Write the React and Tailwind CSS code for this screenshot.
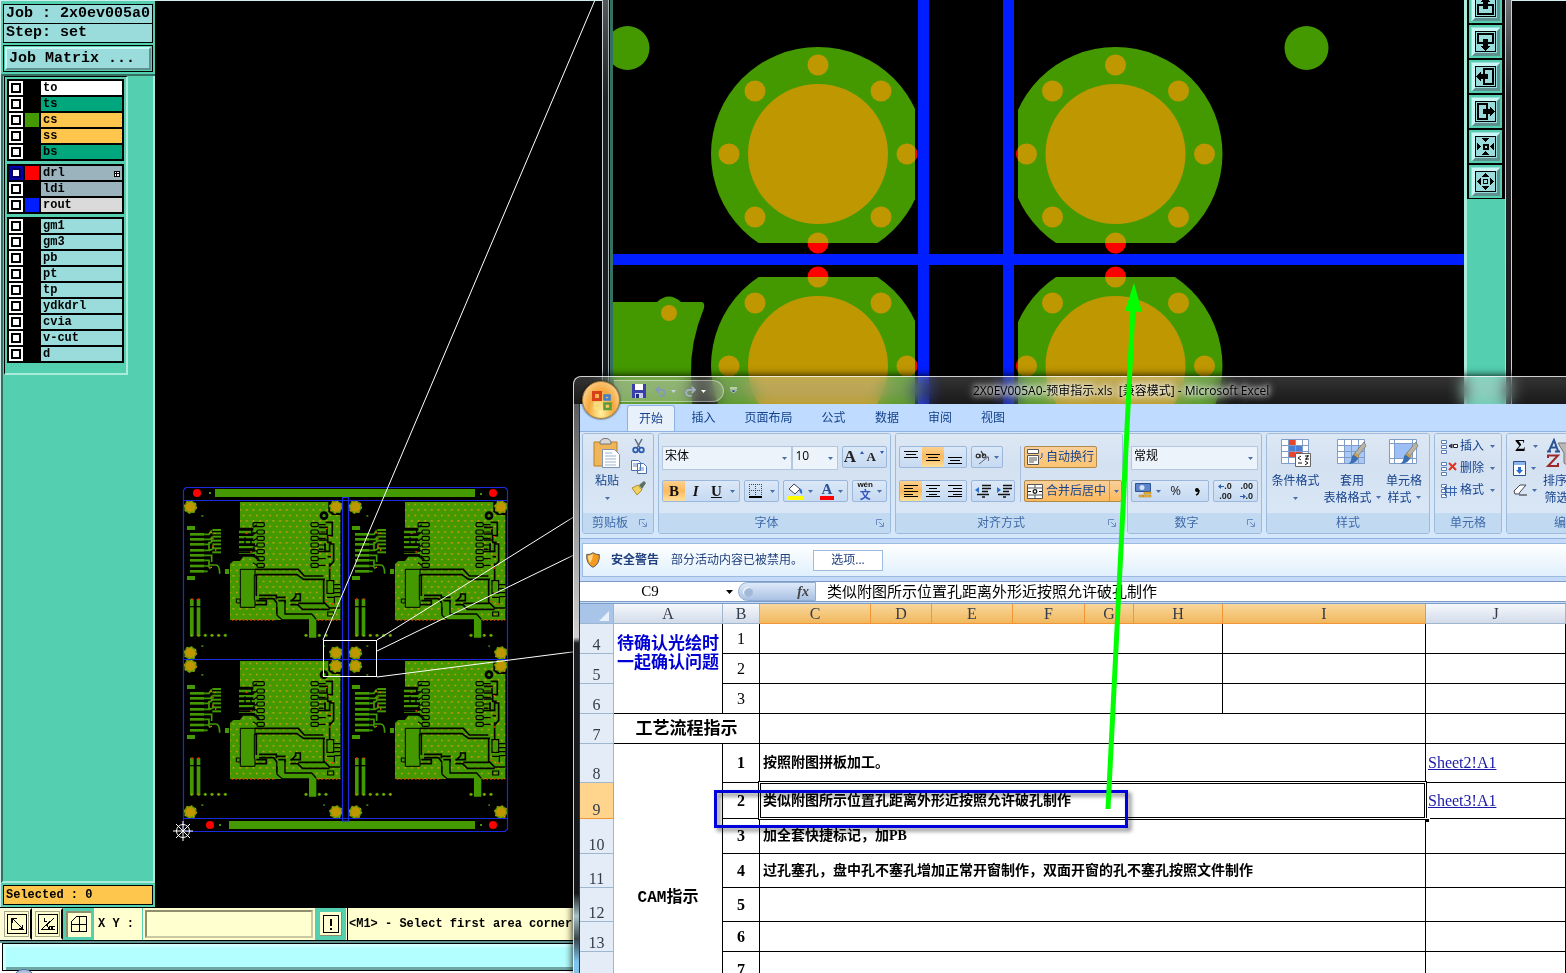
import React, { useState } from "react";
import { Undo2, Redo2 } from "lucide-react";

const LAYER_GROUPS = [
  [
    { name: "to", bg: "bg-white" },
    { name: "ts", bg: "bg-[#00a67c]" },
    { name: "cs", bg: "bg-[#ffc64e]", swatch: "bg-[#449900]" },
    { name: "ss", bg: "bg-[#ffc64e]" },
    { name: "bs", bg: "bg-[#00a67c]" },
  ],
  [
    { name: "drl", bg: "bg-[#9ab3bd]", swatch: "bg-[#ff0000]", active: true },
    { name: "ldi", bg: "bg-[#9ab3bd]" },
    { name: "rout", bg: "bg-[#dadada]", swatch: "bg-[#001eff]" },
  ],
  ["gm1", "gm3", "pb", "pt", "tp", "ydkdrl", "cvia", "v-cut", "d"].map((name) => ({ name, bg: "bg-[#9adcdb]" })),
];

const HOLES = [[0, -89], [63, -63], [89, 0], [63, 63], [0, 89], [-63, 63], [-89, 0], [-63, -63]];

/* ---------- job sidebar ---------- */

function LayerRow({ layer }) {
  const [on, setOn] = useState(!!layer.active);
  return (
    <label className="flex h-3.5 items-stretch gap-0.5">
      <input type="checkbox" checked={on} onChange={() => setOn(!on)}
        className="size-3.5 appearance-none bg-white shadow-[inset_0_0_0_2px_#fff,inset_0_0_0_4px_#000] checked:shadow-[inset_0_0_0_2px_#0000a8,inset_0_0_0_4px_#00006a]" />
      <span className={`w-3.5 ${layer.swatch || "bg-black"}`} />
      <span className={`flex flex-1 items-center justify-between pl-0.5 text-[12px] leading-[14px] ${layer.bg}`}>
        {layer.name}
        {layer.active && (
          <svg width="7" height="7" className="mr-0.5" shapeRendering="crispEdges"><path d="M1 1h5v5h-5zM3.500 1v5M1 3.500h5" fill="#fff" stroke="#000" /></svg>
        )}
      </span>
    </label>
  );
}

function Sidebar() {
  return (
    <aside className="flex w-[155px] shrink-0 flex-col border-l border-l-[#cfeeee] bg-[#54cfb0] font-bold">
      <div className="border-b-2 border-b-[#33705f] px-0.5 pt-[3px] pb-0.5 text-[15px]">
        <div className="border border-black bg-[#9adcdb] px-0.5 leading-[18px] whitespace-pre">Job : 2x0ev005a0</div>
        <div className="mb-0.5 border border-t-0 border-black bg-[#9adcdb] px-0.5 leading-[18px]">Step: set</div>
        <div className="border border-black p-px">
          <button className="block w-full border-2 border-t-[#c9f7f5] border-r-[#5f9090] border-b-[#5f9090] border-l-[#c9f7f5] bg-[#9adcdb] px-0.5 text-left leading-[19px] font-bold">Job Matrix ...</button>
        </div>
      </div>
      <div className="flex flex-1 flex-col border-r-2 border-b-2 border-l-2 border-r-[#a9ecdc] border-b-[#a9ecdc] border-l-[#33705f]">
        <div className="ml-px flex w-[124px] flex-col gap-[3px] border-t border-r-2 border-b-2 border-l border-t-black border-r-[#a9ecdc] border-b-[#a9ecdc] border-l-black px-0.5 pt-0.5 pb-2.5">
          {LAYER_GROUPS.map((group, i) => (
            <div key={i} className="flex flex-col gap-0.5 bg-black p-0.5">
              {group.map((layer) => <LayerRow key={layer.name} layer={layer} />)}
            </div>
          ))}
        </div>
      </div>
      <div className="px-0.5 pt-0.5 pb-0.5">
        <div className="border border-black bg-[#ffc64e] px-0.5 text-[12px] leading-[18px]">Selected : 0</div>
      </div>
    </aside>
  );
}

/* ---------- board overview ---------- */

function Pad({ x, y }) {
  return (
    <g>
      <circle cx={x} cy={y} r="19" fill="#449900" />
      <circle cx={x} cy={y} r="15" fill="#bf9700" />
      <circle cx={x} cy={y} r="18" fill="none" stroke="#bf9700" strokeWidth="5" strokeDasharray="5 9" />
    </g>
  );
}

// one circuit, drawn at three units per pixel
function Circuit() {
  const rows = [134, 156, 175, 195, 215, 236, 256];
  return (
    <g>
      <path d="M195 66H460V95L472 105H496V420H165V252L175 243H195L206 228H240V222H192V215H240V205H192V198H240V190H192V183H235V175H192V168H235V160H192V152H235V143H195Z" fill="#449900" />
      <path d="M195 66H460V95L472 105H496V420H165V252L175 243H195L206 228H240V143H195Z" fill="url(#vias)" />
      {[159, 174, 189, 207, 222, 237, 254, 270].map((y) => (
        <path key={y} d={`M45 ${y}h43v8h-43z`} fill="#449900" />
      ))}
      <path d="M36 138h24v12h-24zM36 288h24v12h-24zM150 267h12v15h-12z" fill="#449900" />
      {[147, 157, 167, 179, 190, 202, 214].map((y) => (
        <path key={y} d={`M112 ${y}h26v6h-26z`} fill="#449900" />
      ))}
      <path d="M88 163h14l8-12M88 178h18l6-8M88 193h12l14-12M88 211h16l10-5M88 226h22v20M88 241h14v14h20q12 0 12 26M88 258h12l6 8M88 274h10M102 185v24M110 170v16" fill="none" stroke="#449900" strokeWidth="5" />
      <path d="M106 156h5v4h-5zM118 158h5v4h-5zM112 174h4v4h-4zM112 196h4v8h-4zM120 208h4v4h-4zM106 260h5v4h-5z" fill="#e07800" />
      <path d="M45 357h11v111h-11zM65 357h11v111h-11z" fill="#449900" />
      <path d="M40 380h40" stroke="#000" strokeWidth="4" />
      <path d="M48 357h6M68 357h6" stroke="#e02000" strokeWidth="5" />
      {[50, 71, 91, 111, 131, 151, 393, 413, 433, 453].map((x) => (
        <g key={x}>
          <circle cx={x} cy="466" r="5" fill="#449900" />
          <circle cx={x} cy="466" r="2.5" fill="#bf9700" />
        </g>
      ))}
      <path d="M170 420H303M428 420H496" stroke="#d04a00" strokeWidth="4" strokeDasharray="5 6" />

      <circle cx="447" cy="107" r="13" fill="#000" />
      <circle cx="447" cy="107" r="5" fill="#449900" />
      {rows.map((y, i) => (
        <g key={y} fill="#449900" stroke="#000" strokeWidth="3.5">
          <rect x={i === 0 ? 234 : 246} y={y - 6} width={i === 0 ? 34 : 22} height="12" rx="4" />
          <rect x="408" y={y - 6} width="22" height="12" rx="4" />
          <path d={`M246 ${y}l-12 ${i > 3 ? -8 : 8}M430 ${y}h22`} fill="none" />
        </g>
      ))}
      <path d="M210 147h20v12h10M210 172v20M228 180v14M210 208h30M192 218h40M205 228h38l10 12" fill="none" stroke="#000" strokeWidth="4" />
      <path d="M452 127h20v40h-14v20h12M432 142h24v20h-24M432 180h24M450 190v24h14v-22h12v52l-12 14v40M432 208h14M458 230h10M464 250v50" fill="none" stroke="#000" strokeWidth="5" />
      <path d="M196 268h44v17h-2v74h2v23h-44zM184 357h12v12h-12z" fill="#449900" stroke="#000" strokeWidth="3" />
      <path d="M240 268h130l18 20h57M240 286h4v62M242 284h124l20 14h64M446 298v68l18 18h32M244 362h30v12h-34M252 346h52v12M252 356h44l10 14v32M306 352h26M310 362h20v8M348 364l14-14v-8h14v20h-30M346 374h22l14 14h82M370 370h78" fill="none" stroke="#000" strokeWidth="5" />
      <path d="M308 366h20v36h90l6 20v51h-22v-54h-80l-16-16z" fill="#449900" />
      <path d="M330 362v40h80l14 16M306 382v24l16 14h80" fill="none" stroke="#000" strokeWidth="4" />
      <path d="M456 302h20v38h-20zM478 314h18M478 326h18M478 338h18M478 350h18M456 352h22v18M458 396h18v12h-18z" fill="none" stroke="#000" strokeWidth="3.5" />
      <path d="M452 144h5v4h-5zM460 168h5v4h-5zM464 223h5v5h-5zM462 262h5v4h-5zM452 362h6v4h-6zM470 370h6v5h-6zM212 158h5v4h-5zM226 214h5v4h-5z" fill="#f04000" />
      <path d="M79 105h6v5h-6zM79 496h6v5h-6zM445 496h5v5h-5z" fill="#3b7a10" />
      <Pad x={46} y={81} />
      <Pad x={483} y={81} />
      <Pad x={46} y={519} />
      <Pad x={483} y={519} />
    </g>
  );
}

function BoardOverview() {
  return (
    <svg className="h-full w-full" role="img" aria-label="Board set">
      <defs>
        <pattern id="vias" width="20" height="33" patternUnits="userSpaceOnUse">
          <path d="M3 5h5v5h-5zM13 21h5v5h-5z" fill="#c99a10" />
        </pattern>
      </defs>
      <g transform="translate(-155 -1)">
        {[[175, 480], [340, 480], [175, 639], [340, 639]].map(([x, y]) => (
          <g key={`${x}-${y}`} transform={`translate(${x} ${y}) scale(.3333)`}><Circuit /></g>
        ))}
        <path d="M215 489H475V497H215ZM229 821H475V829H229Z" fill="#449900" />
        <g fill="none" stroke="#1a2ae0" strokeWidth="1.2">
          <path d="M186 487.500H505L507.500 490V829L505 831.500H186L183.500 829V490Z" />
          <path d="M183 500.500H507M183 659.500H507M183 818.500H507M342.500 821V497.500H348.500V821Z" />
        </g>
        <g fill="#ff0000">
          <circle cx="197" cy="493" r="4" /><circle cx="493" cy="493" r="4" />
          <circle cx="210" cy="825" r="4" /><circle cx="493" cy="825" r="4" />
        </g>
        <path d="M209 492h2v2h-2zM480 493h2v2h-2zM219 824h2v2h-2zM480 824h2v2h-2z" fill="#449900" />
        <g fill="none" stroke="#fff">
          <path d="M323.500 640.500H376.500V676.500H323.500Z" shapeRendering="crispEdges" />
          <path d="M323 640L595 0M377 640L580 513M377 651L580 552M377 677L580 651" />
          <circle cx="183" cy="831" r="6.500" />
          <path d="M173 831H193M183 821V841M176 824L190 838M190 824L176 838" />
        </g>
      </g>
    </svg>
  );
}

/* ---------- command bars under the board ---------- */

function CommandBar() {
  const tool = "flex w-[31px] items-center justify-center border-2 border-[#fafae0] border-r-black bg-[#ffffcf] outline-1 -outline-offset-4 outline-[#a8a888]";
  return (
    <div className="flex h-[34px] shrink-0 items-stretch border-y border-black bg-[#ffffcf] pl-px text-[12px] font-bold">
      <button aria-label="Zoom area" className={tool}>
        <svg width="20" height="20" fill="none" stroke="#000" shapeRendering="crispEdges"><path d="M.5.5h19v19H.5zM4.500 3.500v12h12M5.500 4.500l10 10M5.500 8.500v-4h4M15.500 10.500v4h-4" /></svg>
      </button>
      <button aria-label="Angle" className={tool}>
        <svg width="20" height="20" fill="none" stroke="#000" shapeRendering="crispEdges"><path d="M.5.5h19v19H.5zM16.500 3.500l-13 12h7M6.500 3.500v4h2M8.500 10.500l3 5M13.500 12.500h-2v3h2zM16.500 12.500h-2v3h2" /></svg>
      </button>
      <button aria-label="Grid" className="flex w-[31px] items-center justify-center border-3 border-[#54cfb0] bg-[#ffffcf] shadow-[inset_2px_2px_0_#8f8f70]">
        <svg width="16" height="16" fill="none" stroke="#000" shapeRendering="crispEdges"><path d="M.5 5.500l5-5h10v15H.5zM8.500 0v16M0 8.500h16" /></svg>
      </button>
      <label htmlFor="xy" className="w-12 pl-1 leading-8 whitespace-pre">X Y :</label>
      <div className="border-x border-[#54cfb0] px-0.5 py-0.5">
        <input id="xy" className="block h-7 w-[168px] border-2 border-t-[#8f8f70] border-r-[#c9c9a4] border-b-[#c9c9a4] border-l-[#8f8f70] bg-[#ffffcf] px-1" />
      </div>
      <button aria-label="Message" className="flex w-[30px] items-center justify-center border-4 border-[#54cfb0] bg-[#ffffcf] shadow-[inset_-1px_-1px_0_#8f8f70]">
        <svg width="16" height="18" fill="none" stroke="#000" shapeRendering="crispEdges"><path d="M.5.5h15v17H.5z" /><path d="M8 4v7M8 13v2" strokeWidth="2" /></svg>
      </button>
      <p className="ml-px flex-1 border-l border-black pl-px leading-8 whitespace-nowrap">&lt;M1&gt; - Select first area corner</p>
    </div>
  );
}

/* ---------- zoomed board window ---------- */

function PadDetail({ x, y, clip }) {
  return (
    <g>
      {HOLES.map(([dx, dy]) => <circle key={`${dx}${dy}`} cx={x + dx} cy={y + dy} r="10.500" fill="#ff0000" />)}
      <g clipPath={`url(#${clip})`}>
        <circle cx={x} cy={y} r="107" fill="#449900" />
        <circle cx={x} cy={y} r="70" fill="#bf9700" />
        {HOLES.map(([dx, dy]) => <circle key={`${dx}${dy}`} cx={x + dx} cy={y + dy} r="10.500" fill="#bf9700" />)}
      </g>
    </g>
  );
}

// frame outline, then the solid arrow leaving it
const NAV = [
  ["Pan up", "M3 9h15v9h-15z", "M8 13V6H6l4.500-5L15 6h-2v7z"],
  ["Pan down", "M3 3h15v9h-15z", "M8 8v7H6l4.500 5L15 15h-2V8z"],
  ["Pan left", "M9 3h9v15h-9z", "M13 8H6V6l-5 4.500L6 15v-2h7z"],
  ["Pan right", "M3 3h9v15h-9z", "M8 8h7V6l5 4.500L15 15v-2H8z"],
];

function NavButton({ label, children }) {
  return (
    <button aria-label={label} className="flex h-[33px] w-[33px] shrink-0 items-center justify-center border-2 border-[#54cfb0] bg-[#9adcdb]">
      <span className="flex h-7 w-7 items-center justify-center border-3 border-t-[#c9f7f5] border-r-[#5f9090] border-b-[#5f9090] border-l-[#c9f7f5]">
        <svg width="21" height="21" shapeRendering="crispEdges"><path d="M.5.5h20v20H.5z" fill="none" stroke="#000" />{children}</svg>
      </span>
    </button>
  );
}

function DetailWindow() {
  return (
    <section className="absolute top-0 right-[54px] bottom-0 left-[602px] flex border-x border-[#c8d4d6] bg-black">
      <div className="w-1.5 border-r border-[#aab8ba] bg-linear-to-b from-[#55595c] via-[#202225] via-10% to-[#101214]" />
      <div className="ml-px w-[3px] bg-[#33705f]" />
      <svg className="h-full min-w-0 flex-1" role="img" aria-label="Board detail">
        <defs>
          <clipPath id="tl"><path d="M600 0H915V243H600Z" /></clipPath>
          <clipPath id="tr"><path d="M1018 0H1300V243H1018Z" /></clipPath>
          <clipPath id="bl"><path d="M600 277H915V500H600Z" /></clipPath>
          <clipPath id="br"><path d="M1018 277H1300V500H1018Z" /></clipPath>
        </defs>
        <g transform="translate(-613 0)">
          <circle cx="627.500" cy="48" r="22" fill="#449900" />
          <circle cx="1306.500" cy="48" r="22" fill="#449900" />
          <PadDetail x={818} y={154} clip="tl" />
          <PadDetail x={1115.5} y={154} clip="tr" />
          <PadDetail x={818} y={366} clip="bl" />
          <PadDetail x={1115.5} y={366} clip="br" />
          <path d="M613 302H657Q669 291 681 302H702Q705 303 704 308Q690 342 691 375L693 420H613Z" fill="#449900" />
          <circle cx="669" cy="313" r="8" fill="#bf9700" />
          <path d="M918 0h11v500h-11zM1003 0h11v500h-11zM613 254h851v11h-851z" fill="#001eff" />
        </g>
      </svg>
      <div className="flex w-[41px] flex-col border-l-3 border-[#a9ecdc] bg-[#54cfb0]">
        <div className="-mt-2.5 flex flex-col gap-0.5 bg-black px-0.5 pb-px">
          {NAV.map(([label, frame, arrow]) => (
            <NavButton key={label} label={label}>
              <path d={frame} fill="none" stroke="#000" strokeWidth="2" />
              <path d={arrow} />
            </NavButton>
          ))}
          <NavButton label="Zoom in">
            <path d="M8.500 8.500h4v4h-4z" fill="none" stroke="#000" strokeWidth="2" />
            <path d="M6 2h9l-4.500 4zM6 19h9l-4.500-4zM2 6v9l4-4.500zM19 6v9l-4-4.500z" />
          </NavButton>
          <NavButton label="Zoom out">
            <path d="M8.500 8.500h4v4h-4z" fill="none" stroke="#000" />
            <path d="M7 6h7l-3.500-4zM7 15h7l-3.500 4zM6 7v7l-4-3.500zM15 7v7l4-3.500z" />
          </NavButton>
        </div>
      </div>
      <div className="w-1.5 border-l border-[#c8d4d6] bg-linear-to-b from-[#6d7376] via-[#202225] via-10% to-[#101214]" />
    </section>
  );
}

/* ---------- spreadsheet window ---------- */

function Caret({ className = "" }) {
  return <svg width="5" height="3" className={`shrink-0 ${className}`}><path d="M0 0h5l-2.500 3z" fill="#4a6fa8" /></svg>;
}

function Lines({ rows }) {
  return (
    <svg width="14" height="14" shapeRendering="crispEdges">
      {rows.map(([x, y, w]) => <path key={y} d={`M${x} ${y + 0.5}h${w}`} stroke="#000" strokeWidth="1" />)}
    </svg>
  );
}

function Btn({ label, on, wide, children }) {
  return (
    <button aria-label={label}
      className={`flex h-full items-center justify-center gap-1 ${wide ? "flex-[3]" : "flex-[2]"} ${on ? "bg-linear-to-b from-[#fcd08c] via-[#fbb95c] to-[#fde09a]" : ""}`}>
      {children}
    </button>
  );
}

function Strip({ className, children }) {
  return (
    <div className={`flex h-[22px] overflow-hidden rounded-xs border border-[#9bb7dc] bg-linear-to-b from-[#dbe8f7] to-[#c6daf2] ${className}`}>{children}</div>
  );
}

function Combo({ label, value, className }) {
  return (
    <div className={`relative h-6 border border-[#b3c7e1] bg-[#ecf3fb] ${className}`}>
      <select aria-label={label} className="block h-full w-full appearance-none pb-1 pl-0.5 text-[12px] leading-4 text-black">
        <option>{value}</option>
      </select>
      <Caret className="pointer-events-none absolute top-2.5 right-1" />
    </div>
  );
}

function Group({ title, width, launcher, children }) {
  return (
    <section className={`flex shrink-0 flex-col overflow-hidden rounded-[3px] border border-[#9cbbdd] bg-[#d3e2f3] shadow-[inset_1px_1px_0_#eef5fc] ${width}`}>
      <div className="min-h-0 flex-1 bg-linear-to-b from-[#dde8f4] via-[#d4e1f1] via-40% to-[#d8e6f6]">{children}</div>
      <h2 className="relative h-5 bg-[#c1d9f1] text-center text-[12px] leading-5 text-[#3e6aaa]">
        <span className={launcher ? "pr-4" : ""}>{title}</span>
        {launcher && (
          <svg width="8" height="8" className="absolute top-1.5 right-1.5" fill="none" stroke="#6b8dbf"><path d="M.5 6V.5H6M3 3l4 4M7.500 3.500v4h-4" /></svg>
        )}
      </h2>
    </section>
  );
}

function Brush() {
  return (
    <g>
      <path d="M29 8L21 18l-4-2L27 4z" fill="#b9b4a6" stroke="#6b6557" strokeWidth=".6" />
      <path d="M18 15l4 3q-1 7-11 8q4-3 4-8z" fill="#3b6fb5" />
      <path d="M18 15l4 3-1 2-4-3z" fill="#e0a030" />
    </g>
  );
}

function Grid30({ children }) {
  return (
    <svg width="30" height="30">
      <path d="M.5 1.500h27v24H.5z" fill="#fff" />
      {children}
    </svg>
  );
}

const GRID_LINES = "M.5 1.500h27v24H.5zM7.500 1.500v24M14.500 1.500v24M21.500 1.500v24M.5 7.500h27M.5 13.500h27M.5 19.500h27";

function BigButton({ width, icon, lines, caret }) {
  return (
    <button className={`flex h-full shrink-0 flex-col items-center pt-1 text-[12px] leading-[17px] text-[#15428b] ${width}`}>
      {icon}
      <span className="mt-1 whitespace-nowrap">{lines[0]}</span>
      {lines[1] ? (
        <span className="flex items-center gap-1 whitespace-nowrap">{lines[1]}{caret && <Caret />}</span>
      ) : <Caret className="mt-2" />}
    </button>
  );
}

function ClipboardGroup() {
  return (
    <Group title="剪贴板" width="w-[72px]" launcher>
      <div className="flex h-full">
        <BigButton width="w-12" lines={["粘贴"]} icon={
          <svg width="28" height="30">
            <path d="M1 4h23v24H1z" fill="#efb558" stroke="#b9822a" />
            <path d="M7 4q1-3 4-3.500h3q3 .5 4 3.500v2H7z" fill="#d8d8d8" stroke="#777" />
            <path d="M9.500 11.500h12l5 5v13h-17z" fill="#fff" stroke="#7f93b2" />
            <path d="M12 15h7M12 18h11M12 21h11M12 24h11M12 27h11" stroke="#9db3d4" />
          </svg>
        } />
        <div className="flex flex-col gap-1.5 pt-1">
          <button aria-label="剪切"><svg width="16" height="16"><path d="M4 1l5 9M11 1L6 10" stroke="#5b6a80" strokeWidth="1.500" /><circle cx="4.500" cy="12" r="2.300" fill="none" stroke="#2a5db0" strokeWidth="1.800" /><circle cx="10.500" cy="12" r="2.300" fill="none" stroke="#2a5db0" strokeWidth="1.800" /></svg></button>
          <button aria-label="复制"><svg width="16" height="14"><path d="M.5.5h7l2 2v8h-9zM6.500 3.500h6l3 3v7h-9z" fill="#fff" stroke="#4a6fb0" /><path d="M2 4h4M2 6h4M8 8h5M8 10h5" stroke="#5f8ad0" /></svg></button>
          <button aria-label="格式刷"><svg width="16" height="16"><path d="M1 8l6-3 4 5-5 5z" fill="#f0d060" stroke="#b0902a" /><path d="M8 5l5-4 2 2-4 6z" fill="#5a7060" /></svg></button>
        </div>
      </div>
    </Group>
  );
}

function FontGroup() {
  return (
    <Group title="字体" width="w-[233px]" launcher>
      <div className="flex flex-col gap-2.5 px-[3px] pt-3">
        <div className="flex">
          <Combo label="字体" value="宋体" className="w-[131px]" />
          <Combo label="字号" value="10" className="w-[46px]" />
          <Strip className="ml-1 w-[45px]">
            <Btn label="增大字号"><span className="font-['Liberation_Serif',serif] text-[17px] font-bold text-[#222]">A</span><svg width="4" height="14"><path d="M0 4l2-3 2 3z" fill="#2a5db0" /></svg></Btn>
            <Btn label="减小字号"><span className="font-['Liberation_Serif',serif] text-[13px] font-bold text-[#222]">A</span><svg width="4" height="14"><path d="M0 1h4l-2 3z" fill="#2a5db0" /></svg></Btn>
          </Strip>
        </div>
        <div className="flex gap-1 font-['Liberation_Serif',serif] text-[15px] text-[#111]">
          <Strip className="w-[79px]">
            <Btn on label="加粗"><b>B</b></Btn>
            <Btn label="倾斜"><b className="italic">I</b></Btn>
            <Btn wide label="下划线"><b className="underline">U</b><Caret className="ml-1" /></Btn>
          </Strip>
          <Strip className="w-[35px]">
            <Btn label="边框"><svg width="13" height="14" fill="none" shapeRendering="crispEdges"><path d="M.5 0v12M6.500 0v12M12.500 0v12M0 .5h13M0 6.500h13" stroke="#444" strokeDasharray="1 1" /><path d="M0 13h13" stroke="#000" strokeWidth="2" /></svg><Caret className="ml-1" /></Btn>
          </Strip>
          <Strip className="w-[66px]">
            <Btn label="填充颜色"><svg width="17" height="18"><path d="M2 7l5-5 6 5-5 5z" fill="#fff" stroke="#445" /><path d="M12 6q4 1 3 6q-3-1-3-6z" fill="#2a6fd0" /><path d="M0 14h16v4H0z" fill="#ffff00" /></svg><Caret /></Btn>
            <Btn label="字体颜色"><span className="flex flex-col items-center border-b-4 border-[#ff0000] px-0.5 text-[15px] leading-[13px] font-bold text-[#2c5296]">A</span><Caret /></Btn>
          </Strip>
          <Strip className="w-[35px]">
            <Btn label="拼音"><span className="flex flex-col items-center font-['Liberation_Sans','Noto_Sans_CJK_SC',sans-serif] text-[8px] leading-[8px] font-bold">wén<span className="text-[11px] leading-[12px] text-[#3355c0]">文</span></span><Caret /></Btn>
          </Strip>
        </div>
      </div>
    </Group>
  );
}

const FULL = 14;

function AlignGroup() {
  return (
    <Group title="对齐方式" width="w-[228px]" launcher>
      <div className="flex pt-3 pl-[3px] text-[12px] text-[#15428b]">
        <div className="flex w-[122px] flex-col gap-3 border-r border-[#a8c0e0]">
          <div className="flex gap-1">
            <Strip className="w-[68px]">
              <Btn label="顶端对齐"><Lines rows={[[0, 1, FULL], [2, 4, 10], [0, 7, FULL]]} /></Btn>
              <Btn on label="垂直居中"><Lines rows={[[0, 4, FULL], [2, 7, 10], [0, 10, FULL]]} /></Btn>
              <Btn label="底端对齐"><Lines rows={[[0, 7, FULL], [2, 10, 10], [0, 13, FULL]]} /></Btn>
            </Strip>
            <Strip className="w-[32px]">
              <Btn label="方向"><svg width="15" height="15" fill="none" stroke="#333"><circle cx="3" cy="6" r="1.800" strokeWidth="1.300" /><path d="M5 4v4M6 1l3 5" strokeWidth="1.300" /><circle cx="9" cy="6" r="1.800" strokeWidth="1.300" /><path d="M4 14L13 7M9.500 7h4v4" stroke="#667" /></svg><Caret /></Btn>
            </Strip>
          </div>
          <div className="flex gap-1">
            <Strip className="w-[68px]">
              <Btn on label="左对齐"><Lines rows={[[0, 1, FULL], [0, 4, 9], [0, 7, FULL], [0, 10, 9], [0, 12, FULL]]} /></Btn>
              <Btn label="居中"><Lines rows={[[0, 1, FULL], [3, 4, 8], [0, 7, FULL], [3, 10, 8], [0, 12, FULL]]} /></Btn>
              <Btn label="右对齐"><Lines rows={[[0, 1, FULL], [5, 4, 9], [0, 7, FULL], [5, 10, 9], [0, 12, FULL]]} /></Btn>
            </Strip>
            <Strip className="w-[44px]">
              <Btn label="减少缩进量"><svg width="16" height="14"><path d="M7 1.500h9M7 4.500h9M7 7.500h6M2 10.500h12M7 13h3" stroke="#111" strokeWidth="1.500" /><path d="M0 6l4-3v6z" fill="#2a6fd0" /></svg></Btn>
              <Btn label="增加缩进量"><svg width="16" height="14"><path d="M7 1.500h9M7 4.500h9M7 7.500h6M2 10.500h12M7 13h3" stroke="#111" strokeWidth="1.500" /><path d="M5 6l-4-3v6z" fill="#2a6fd0" /></svg></Btn>
            </Strip>
          </div>
        </div>
        <div className="ml-[3px] flex flex-col items-start gap-3">
          <button className="flex h-[22px] items-center gap-0.5 rounded-xs border border-[#b08b4c] bg-linear-to-b from-[#f9cf98] to-[#fdc572] px-0.5 whitespace-nowrap">
            <svg width="17" height="16"><path d="M.5.5h11v4H.5zM.5 6.500h11v9H.5z" fill="#fff" stroke="#555" /><path d="M2 9h8M2 11h8M2 13h5" stroke="#555" /><path d="M15 4v4l-2 2" fill="none" stroke="#2a5db0" /></svg>自动换行
          </button>
          <button className="flex h-[22px] items-center gap-0.5 rounded-xs border border-[#b08b4c] bg-linear-to-b from-[#f9cf98] to-[#fdb95c] px-0.5 whitespace-nowrap">
            <svg width="17" height="15"><path d="M.5.5h15v14H.5zM.5 4h15M.5 11h15M8 .5V4M8 11v3.500" fill="#fff" stroke="#555" /><path d="M1 7.500h3M12 7.500h3" stroke="#111" /><circle cx="8" cy="7.500" r="1.800" fill="none" stroke="#111" strokeWidth="1.300" /></svg>合并后居中
            <span className="ml-px flex h-full items-center border-l border-[#c99a52] pl-1"><Caret /></span>
          </button>
        </div>
      </div>
    </Group>
  );
}

function NumberGroup() {
  return (
    <Group title="数字" width="w-[135px]" launcher>
      <div className="flex flex-col gap-2.5 px-[3px] pt-3">
        <Combo label="数字格式" value="常规" className="w-full" />
        <div className="flex gap-1 text-[13px] text-[#222]">
          <Strip className="w-[79px]">
            <Btn wide label="会计数字格式"><svg width="17" height="16"><path d="M.5.5h15v8h-15z" fill="#5c86c8" stroke="#2c5296" /><circle cx="7" cy="4.500" r="2.500" fill="#cfe0f8" /><path d="M9 9h7v2H9zM8 12h8v2H8zM4 12h4v2H4z" fill="#f0b93a" stroke="#a97a18" strokeWidth=".5" /></svg><Caret /></Btn>
            <Btn label="百分比">%</Btn>
            <Btn label="千位分隔"><svg width="6" height="9"><circle cx="3" cy="3" r="2" /><path d="M5 3q0 4-3 5" fill="none" stroke="#000" strokeWidth="1.500" /></svg></Btn>
          </Strip>
          <Strip className="w-[45px] font-['Liberation_Sans',sans-serif] text-[9px] leading-[10px] font-bold">
            <Btn label="增加小数位数">
              <span className="flex flex-col items-end">
                <span className="flex items-center"><svg width="6" height="5"><path d="M0 2.500l3-2.500v5zM3 2h3v1h-3z" fill="#2a5db0" /></svg>.0</span>
                <span>.00</span>
              </span>
            </Btn>
            <Btn label="减少小数位数">
              <span className="flex flex-col items-end">
                <span>.00</span>
                <span className="flex items-center"><svg width="6" height="5"><path d="M6 2.500l-3-2.500v5zM0 2h3v1h-3z" fill="#2a5db0" /></svg>.0</span>
              </span>
            </Btn>
          </Strip>
        </div>
      </div>
    </Group>
  );
}

function StyleGroup() {
  return (
    <Group title="样式" width="w-[164px]">
      <div className="flex h-full pl-px">
        <BigButton width="w-[55px]" lines={["条件格式"]} icon={
          <Grid30>
            <path d="M7 1h7v6H7zM7 13h14v6H7z" fill="#e8452c" /><path d="M7 7h14v6H7z" fill="#4a7fd8" />
            <path d={GRID_LINES} fill="none" stroke="#7f9dc8" />
            <path d="M14.500 15.500h15v13h-15z" fill="#fff" stroke="#666" />
            <path d="M20 18l-3 2 3 2M24 18h4M24 21h4M27 17l-2 5M17 25h4M24 23l3 2-3 2" fill="none" stroke="#111" />
          </Grid30>
        } />
        <BigButton width="w-[58px]" lines={["套用", "表格格式"]} caret icon={
          <Grid30><path d="M7 7h21v19H7z" fill="#a9c8f5" /><path d={GRID_LINES} fill="none" stroke="#7f9dc8" /><Brush /></Grid30>
        } />
        <BigButton width="w-[46px]" lines={["单元格", "样式"]} caret icon={
          <Grid30><path d="M.5 1.500h27v24H.5zM5.500 1.500v24M23.500 1.500v24M.5 5.500h27M.5 20.500h27" fill="none" stroke="#7f9dc8" /><path d="M6 6h17v14H6z" fill="#9cc0f5" /><Brush /></Grid30>
        } />
      </div>
    </Group>
  );
}

function CellsGroup() {
  const items = [
    ["插入", <path key="a" d="M8 7h3v-2l-3 2 3 2v-2zM12.500 5.500h4v3h-4z" fill="#fff" stroke="#223" />],
    ["删除", <path key="b" d="M8 2l7 7M15 2l-7 7" stroke="#e03020" strokeWidth="2" />],
    ["格式", <path key="c" d="M3 5.500h13M4.500 3v10M9.500 3v10M13.500 3v10M3 9.500h13" fill="none" stroke="#3a66b0" />],
  ];
  return (
    <Group title="单元格" width="w-[68px]">
      <div className="flex flex-col gap-1.5 pt-1 pl-1.5 text-[12px] leading-4 text-[#15428b]">
        {items.map(([name, art]) => (
          <button key={name} className="flex items-center gap-0.5 whitespace-nowrap">
            <svg width="17" height="15"><path d="M.5 1.500h5v3h-5zM.5 6.500h5v3h-5zM.5 11.500h5v3h-5z" fill="#fff" stroke="#5a7fb8" />{art}</svg>
            {name}<Caret className="ml-1" />
          </button>
        ))}
      </div>
    </Group>
  );
}

function EditGroup() {
  return (
    <Group title="编辑" width="w-[120px]">
      <div className="flex text-[12px] text-[#15428b]">
        <div className="flex w-[35px] flex-col gap-1.5 pt-1 pl-1.5">
          <button aria-label="求和" className="flex h-4 items-center gap-2 pl-0.5 font-['Liberation_Serif',serif] text-[16px] font-bold text-black">Σ<Caret /></button>
          <button aria-label="填充" className="flex h-4 items-center gap-1"><svg width="14" height="15"><path d="M.5.5h12v14H.5z" fill="#fff" stroke="#2c5296" /><path d="M1 1h11v3H1z" fill="#8db4ea" /><path d="M5 6h3v3h2l-3.500 4L3 9h2z" fill="#2a6fd0" /></svg><Caret /></button>
          <button aria-label="清除" className="flex h-4 items-center gap-1"><svg width="15" height="12"><path d="M1 7l6-6h6l-6 7-1 2H2z" fill="#fff" stroke="#445" /><path d="M6 11h8" stroke="#222" /></svg><Caret /></button>
        </div>
        <BigButton width="w-[38px]" lines={["排序和", "筛选"]} caret icon={
          <svg width="34" height="30" className="ml-1 shrink-0" fill="none" strokeWidth="2.500">
            <path d="M1 13.500h4M3 13L8 2l4 11M5 9.500h6M9 13.500h5" stroke="#2c5296" strokeWidth="2" />
            <path d="M2 20v-2.500h10L2 28h10v-3" stroke="#9c2a2a" strokeWidth="2" />
            <path d="M12 5h18l-6 10v14l-6-4V15z" fill="#b8b8b8" stroke="#777" strokeWidth="1" />
          </svg>
        } />
      </div>
    </Group>
  );
}

function TitleBar() {
  return (
    <header className="relative flex h-7 shrink-0 items-center rounded-tl-lg border-t border-l border-white/80 bg-linear-to-b from-white/20 to-white/10 backdrop-blur-sm backdrop-saturate-60">
      <div className="mt-px ml-10 flex h-[22px] w-[110px] items-center gap-2 rounded-r-full border border-l-0 border-white/40 bg-white/20 pl-[18px]">
        <button aria-label="保存"><svg width="14" height="14"><path d="M0 0h14v14H0z" fill="#3b3fae" /><path d="M3 0h8v6H3z" fill="#fff" /><path d="M3 9h8v5H3z" fill="#c9cdf2" /><path d="M4 10h3v4H4z" fill="#222a80" /></svg></button>
        <button aria-label="撤消" className="flex items-center gap-1"><Undo2 size={13} strokeWidth={3} color="#8298bd" /><svg width="5" height="3"><path d="M0 0h5l-2.500 3z" fill="#c8d4e8" /></svg></button>
        <button aria-label="恢复" className="flex items-center gap-1"><Redo2 size={13} strokeWidth={3} color="#a4b2cb" /><svg width="5" height="3"><path d="M0 0h5l-2.500 3z" fill="#fff" /></svg></button>
      </div>
      <button aria-label="自定义快速访问工具栏" className="ml-1.5"><svg width="7" height="7"><path d="M0 1h7" stroke="#fff" /><path d="M.5 3h6l-3 3z" fill="#1e3a78" stroke="#fff" strokeWidth=".7" /></svg></button>
      <h1 className="ml-[236px] text-[12px] leading-5 whitespace-pre text-black [text-shadow:0_0_4px_#fffc,0_0_6px_#fffc,0_0_10px_#fffa,0_0_12px_#fffa]">2X0EV005A0-预审指示.xls  [兼容模式] - Microsoft Excel</h1>
      <button aria-label="Office" className="absolute top-1 left-2 z-10 size-[38px] rounded-full border border-[#a87a30] bg-radial-[at_50%_85%] from-[#fff3a0] via-[#f5a83c] to-[#fde6c0] shadow-[0_0_2px_#000]">
        <svg width="26" height="26" className="mx-auto" fill="none" strokeWidth="3"><path d="M5.500 5.500h7v7h-7z" stroke="#d8401c" /><path d="M16.500 8.500h5v4h-5z" stroke="#3f7fd0" strokeWidth="2.500" /><path d="M7 16.500h5.500v5h-5.500z" stroke="#f7df80" strokeWidth="2.500" /><path d="M16.500 16.500h6v5.500h-6z" stroke="#5d9a38" strokeWidth="2.500" /></svg>
      </button>
    </header>
  );
}

function FormulaBar() {
  return (
    <div className="flex h-[21px] shrink-0 items-stretch border-y border-[#7d9cc6] bg-white">
      <input aria-label="名称框" defaultValue="C9" className="w-[140px] text-center font-['Liberation_Serif',serif] text-[15px]" />
      <button aria-label="名称列表" className="flex w-[18px] items-center justify-center"><svg width="7" height="4"><path d="M0 0h7l-3.500 4z" /></svg></button>
      <div className="flex w-[78px] items-center justify-between rounded-l-full border border-[#8fadd6] bg-linear-to-b from-[#dfeafa] to-[#a9c1e2] pr-1.5 pl-1">
        <span className="size-2.5 rounded-full bg-[#a3b9d8] shadow-[inset_1px_1px_1px_#fff]" />
        <button aria-label="插入函数" className="font-['Liberation_Serif',serif] text-[14px] leading-4 font-bold text-[#444] italic">fx</button>
      </div>
      <input aria-label="编辑栏" defaultValue="类似附图所示位置孔距离外形近按照允许破孔制作" className="min-w-0 flex-1 pl-[11px] text-[15px]" />
    </div>
  );
}

const COLUMNS = [["A", "w-[109px]"], ["B", "w-[37px]"], ["C", "w-[111px]"], ["D", "w-[61px]"], ["E", "w-[81px]"], ["F", "w-[72px]"], ["G", "w-[49px]"], ["H", "w-[89px]"], ["I", "w-[203px]"], ["J", ""]];

const TASKS = [
  { row: 8, no: 1, h: "h-[39px]", text: "按照附图拼板加工。", link: "Sheet2!A1" },
  { row: 9, no: 2, h: "h-9", text: "类似附图所示位置孔距离外形近按照允许破孔制作", link: "Sheet3!A1" },
  { row: 10, no: 3, h: "h-[35px]", text: "加全套快捷标记，加PB" },
  { row: 11, no: 4, h: "h-[34px]", text: "过孔塞孔，盘中孔不塞孔增加正常开窗制作，双面开窗的孔不塞孔按照文件制作" },
  { row: 12, no: 5, h: "h-[34px]" },
  { row: 13, no: 6, h: "h-[30px]" },
  { row: "", no: 7, h: "h-9" },
];

const CELL = "border-r border-b border-black";

function RowHead({ n, active }) {
  return (
    <th scope="row" className={`border-r border-b align-bottom font-normal leading-4 text-[#333c4a] ${active ? "border-[#f29536] bg-[#ffd58d]" : "border-[#9eb6ce] bg-[#e4ecf7]"}`}>{n}</th>
  );
}

function Sheet() {
  return (
    <div className="min-h-0 flex-1 overflow-hidden bg-white">
      <table className="w-full table-fixed border-separate border-spacing-0 font-['Liberation_Serif','Noto_Sans_CJK_SC',serif] text-[16px] leading-5 text-black">
        <colgroup>
          <col className="w-[34px]" />
          {COLUMNS.map(([c, w]) => <col key={c} className={w} />)}
        </colgroup>
        <thead>
          <tr className="h-5">
            <th className="border-r border-b border-[#9eb6ce] bg-[#a9c4e9]"><svg width="10" height="10" className="mt-1 mr-1 ml-auto"><path d="M10 0v10H0z" fill="#e8f0fb" /></svg></th>
            {COLUMNS.map(([c]) => (
              <th key={c} scope="col" className={`border-r border-b leading-[18px] font-normal text-[#333c4a] ${"ABJ".includes(c) ? "border-[#9eb6ce] bg-linear-to-b from-[#f6f9fc] to-[#d3dbe9]" : "border-[#f29536] bg-linear-to-b from-[#f8d79b] to-[#f1b85c]"}`}>{c}</th>
            ))}
          </tr>
        </thead>
        <tbody>
          {[1, 2, 3].map((n) => (
            <tr key={n} className="h-[30px]">
              <RowHead n={n + 3} />
              {n === 1 && (
                <td rowSpan={3} className={`${CELL} pt-2.5 text-center align-top text-[17px] leading-[19px] font-bold text-[#0000d4]`}>待确认光绘时<br />一起确认问题</td>
              )}
              <td className={`${CELL} text-center`}>{n}</td>
              <td colSpan={6} className={CELL} />
              <td className={CELL} />
              <td className={CELL} />
            </tr>
          ))}
          <tr className="h-[30px]">
            <RowHead n={7} />
            <td colSpan={2} className={`${CELL} text-center text-[17px] font-bold`}>工艺流程指示</td>
            <td colSpan={7} className={CELL} />
            <td className={CELL} />
          </tr>
          {TASKS.map((t) => (
            <tr key={t.no} className={t.h}>
              <RowHead n={t.row} active={t.row === 9} />
              {t.no === 1 && (
                <td rowSpan={7} className={`${CELL} pt-16 text-center font-['Liberation_Mono','Noto_Sans_CJK_SC',monospace] text-[16px] font-bold`}>CAM指示</td>
              )}
              <td className={`${CELL} text-center font-bold`}>{t.no}</td>
              <td colSpan={7} className={`${CELL} relative pl-[3px] text-[14px] font-bold whitespace-nowrap`}>
                {t.text}
                {t.row === 9 && (
                  <span className="absolute -inset-0.5 border border-black shadow-[inset_0_0_0_1px_#fff,inset_0_0_0_2px_#000]">
                    <span className="absolute -right-1 -bottom-1 size-[5px] border border-white bg-black" />
                  </span>
                )}
              </td>
              <td className={`${CELL} pl-0.5`}>{t.link && <a href="#sheet" className="text-[#1a1aa8] underline">{t.link}</a>}</td>
            </tr>
          ))}
        </tbody>
      </table>
    </div>
  );
}

function ExcelWindow() {
  return (
    <section className="absolute top-[376px] right-0 bottom-0 left-[573px] flex flex-col font-['Open_Sans','Noto_Sans_CJK_SC',sans-serif] shadow-[0_0_8px_#000]">
      <TitleBar />
      <div className="flex min-h-0 flex-1">
        <div className="w-[7px] shrink-0 border-r border-l border-r-[#2a3440] border-l-white/80 bg-[linear-gradient(to_bottom,#5a5c5e_0%,#8a8c8e_15%,#cfcfcf_41%,#1a1e22_42%,#15181b_86%,#a8c4c8_90%,#39454a_94%,#7ec4ec_98%)]" />
        <div className="flex min-w-0 flex-1 flex-col bg-[#c3dafa]">
          <nav className="flex h-[27px] shrink-0 items-end bg-[#bfdbff] pl-[47px] text-[12px] text-[#15428b]">
            <button className="h-[26px] w-12 rounded-t-[3px] border border-b-0 border-[#8db2e3] bg-[#e8f0fa]">开始</button>
            {[["插入", "w-[57px]"], ["页面布局", "w-[73px]"], ["公式", "w-[57px]"], ["数据", "w-[50px]"], ["审阅", "w-14"], ["视图", "w-[50px]"]].map(([t, w]) => (
              <button key={t} className={`h-[26px] ${w}`}>{t}</button>
            ))}
          </nav>
          <div className="flex h-[108px] shrink-0 gap-1 overflow-hidden border-y border-[#8db2e3] bg-linear-to-b from-[#dbe6f4] to-[#d5e8fb] px-0.5 pt-px pb-1">
            <ClipboardGroup />
            <FontGroup />
            <AlignGroup />
            <NumberGroup />
            <StyleGroup />
            <CellsGroup />
            <EditGroup />
          </div>
          <div className="my-1 ml-0.5 flex h-[34px] shrink-0 items-center border border-r-0 border-[#9cbbdd] bg-linear-to-b from-white to-[#e0f0fc] px-[3px] text-[12px] text-[#1f3f7d]">
            <svg width="14" height="16"><path d="M7 .7Q10 3 13.300 2.500Q14 12 7 15.300Q0 12 .7 2.500Q4 3 7 .7z" fill="#f59a1c" stroke="#5a5a5a" /><path d="M7 2Q4.500 4 2 3.800Q2 8 4 11Q7 7 7 2z" fill="#ffd98a" /></svg>
            <strong className="ml-[11px]">安全警告</strong>
            <span className="ml-3">部分活动内容已被禁用。</span>
            <button className="ml-2.5 h-[21px] w-[70px] border border-[#9cbbdd] bg-white">选项...</button>
          </div>
          <FormulaBar />
          <div className="h-0.5 shrink-0 border-b border-[#7d9cc6]" />
          <Sheet />
        </div>
      </div>
    </section>
  );
}

/* ---------- hand-drawn notes over the windows ---------- */

function Annotations() {
  return (
    <>
      <svg className="pointer-events-none absolute inset-0 h-full w-full [filter:drop-shadow(3px_3px_2px_#0008)]">
        <rect x="715.500" y="791.500" width="411" height="35" fill="none" stroke="#0000dc" strokeWidth="3" />
      </svg>
      <svg className="pointer-events-none absolute inset-0 h-full w-full">
        <path d="M1133 308L1108 809" stroke="#00ff00" strokeWidth="5" />
        <path d="M1134 283L1142 312L1125 311Z" fill="#00ff00" />
      </svg>
    </>
  );
}

export default function App() {
  return (
    <main className="relative h-screen w-full overflow-hidden bg-black font-['Liberation_Mono',monospace] text-black">
      <div className="flex h-full flex-col border-t border-[#cfeeee]">
        <div className="flex min-h-0 flex-1">
          <Sidebar />
          <div className="min-w-0 flex-1 bg-black"><BoardOverview /></div>
        </div>
        <CommandBar />
        <div className="h-8 shrink-0 overflow-hidden border-t-2 border-[#5f9090] bg-white pl-0.5">
          <div className="h-7 border border-black bg-[#b3ffff] shadow-[inset_3px_3px_0_#d0ffff,inset_0_-3px_0_#6fa5a5]" />
          <span className="-mt-0.5 ml-2.5 block size-6 rounded-full border border-[#4a6fa8] bg-[#b4c4de]" />
        </div>
      </div>
      <DetailWindow />
      <ExcelWindow />
      <Annotations />
    </main>
  );
}
